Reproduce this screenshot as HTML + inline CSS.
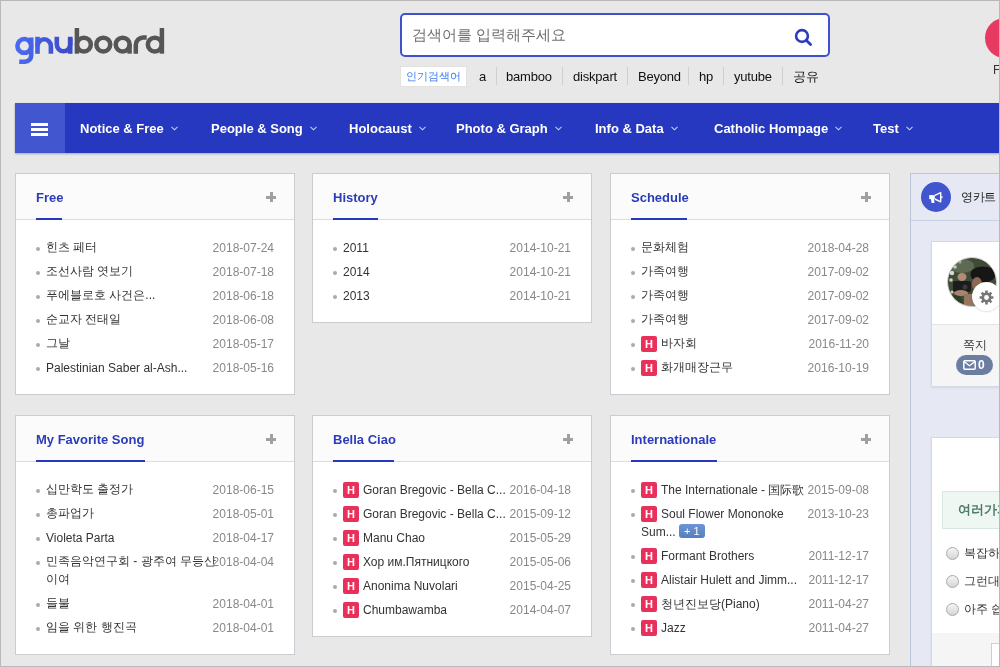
<!DOCTYPE html>
<html><head><meta charset="utf-8">
<style>
*{margin:0;padding:0;box-sizing:border-box}
html,body{width:1000px;height:667px;overflow:hidden}
body{background:#e8e8e8;font-family:"Liberation Sans",sans-serif;color:#333;position:relative}
.frame{position:absolute;left:0;top:0;width:1000px;height:667px;border:1px solid #b9b9b9;pointer-events:none;z-index:50}
.abs{position:absolute}
/* search */
.search{left:400px;top:13px;width:430px;height:44px;border:2px solid #3f51d0;border-radius:5px;background:#fff}
.search .ph{position:absolute;left:10px;top:11px;font-size:15px;color:#707070;line-height:18px}
.kw{top:66px;height:22px;font-size:13px;letter-spacing:-0.2px;line-height:22px;color:#111}
.kwbox{left:400px;top:66px;width:67px;height:21px;background:#fff;border:1px solid #e2e2e2;color:#3a7bf0;font-size:11px;line-height:19px;text-align:center}
.sep{position:absolute;top:67px;width:1px;height:18px;background:#cfcfcf}
/* nav */
.nav{left:15px;top:103px;width:985px;height:50px;background:#2538bf;box-shadow:0 1px 2px rgba(0,0,0,.28)}
.ham{left:15px;top:103px;width:50px;height:50px;background:#4257cf}
.ham i{position:absolute;left:16px;width:17px;height:3px;background:#fff}
.ni{position:absolute;top:120px;font-size:13px;font-weight:bold;color:#fff;line-height:18px;white-space:nowrap}
.chev{display:inline-block;margin-left:7px;vertical-align:2px;width:7px;height:5px}
/* cards */
.card{position:absolute;width:280px;background:#fff;border:1px solid #c9ccd0}
.card .hd{height:46px;background:#fbfbfb;border-bottom:1px solid #dcdcdc;position:relative}
.card .hd b{position:absolute;left:20px;top:15px;font-size:13px;color:#2a3cba;line-height:18px;white-space:nowrap}
.card .hd u{position:absolute;left:20px;top:44px;height:2px;background:#2538bf;text-decoration:none}
.card .hd .plus{position:absolute;right:18px;top:18px;width:10px;height:10px}
.card .hd .plus:before{content:"";position:absolute;left:0;top:3.5px;width:10px;height:3px;background:#a0a0a0}
.card .hd .plus:after{content:"";position:absolute;left:3.5px;top:0;width:3px;height:10px;background:#a0a0a0}
.card ul{list-style:none;padding:15px 20px 15px 20px}
.card li{position:relative;padding:3px 0 3px 10px;white-space:nowrap;line-height:18px;font-size:12px;color:#333}
.card li:before{content:"";position:absolute;left:0;top:12px;width:4px;height:4px;border-radius:50%;background:#aaa}
.card li .t{position:relative}.card li .t.e{top:1px}.card li .d{position:absolute;right:0;top:4px;color:#888;background:transparent}
.h{display:inline-block;width:16px;height:16px;background:#e8305a;border-radius:2px;color:#fff;font-size:11px;font-weight:bold;text-align:center;line-height:16px;vertical-align:top;margin:2px 4px 0 0}
.plus1{display:inline-block;background:linear-gradient(#6b95d3,#5580c0);color:#fff;font-size:11px;line-height:14px;padding:0 5px;border-radius:3px;margin-left:0;vertical-align:1px}
/* sidebar */
.side{left:910px;top:173px;width:100px;height:500px;background:#e6e9f3;border:1px solid #b9c7da}
</style></head><body><div style="will-change:transform;position:absolute;left:0;top:0;width:1000px;height:667px">
<div class="frame"></div>

<!-- logo -->
<svg class="abs" style="left:0;top:0" width="180" height="80" viewBox="0 0 180 80">
 <defs><linearGradient id="lg" gradientUnits="userSpaceOnUse" x1="14" y1="0" x2="73" y2="0"><stop offset="0" stop-color="#4a6cf6"/><stop offset="1" stop-color="#3b49c6"/></linearGradient></defs>
 <g fill="none" stroke="url(#lg)" stroke-width="4.6">
  <circle cx="24.3" cy="45.9" r="6.9"/>
  <path d="M31.2 37.5V55.5a6.2 6.2 0 0 1-6.2 6.2H19.2"/>
  <path d="M37.5 36.8V53.8"/><path d="M37.5 46a6.7 6.7 0 0 1 13.4 0V53.8"/>
  <path d="M56.8 36.8V44.6a6.7 6.7 0 0 0 13.4 0V36.8"/><path d="M70.2 38V53.8"/>
 </g>
 <g fill="none" stroke="#565656" stroke-width="4.5">
  <path d="M76.9 28V53.7"/><circle cx="83.9" cy="44.6" r="6.95"/>
  <circle cx="103.3" cy="44.6" r="6.95"/>
  <circle cx="122.65" cy="44.6" r="6.95"/><path d="M129.6 44.6V53.7"/>
  <path d="M135.8 53.7V45a7.5 7.5 0 0 1 7.5-7.5h3.4"/>
  <circle cx="154.8" cy="44.6" r="6.95"/><path d="M161.9 28V53.7"/>
 </g>
</svg>

<!-- search -->
<div class="abs search"><span class="ph">검색어를 입력해주세요</span>
 <svg style="position:absolute;left:391px;top:13px" width="20" height="20" viewBox="0 0 20 20"><circle cx="9" cy="8" r="5.9" fill="none" stroke="#2a3bbf" stroke-width="2.6"/><path d="M13.2 12.2L17.6 16.6" stroke="#2a3bbf" stroke-width="2.8" stroke-linecap="round"/></svg>
</div>
<div class="abs kwbox">인기검색어</div>
<div class="abs kw" style="left:479px">a</div>
<div class="sep" style="left:496px"></div>
<div class="abs kw" style="left:506px">bamboo</div>
<div class="sep" style="left:562px"></div>
<div class="abs kw" style="left:573px">diskpart</div>
<div class="sep" style="left:627px"></div>
<div class="abs kw" style="left:638px">Beyond</div>
<div class="sep" style="left:688px"></div>
<div class="abs kw" style="left:699px">hp</div>
<div class="sep" style="left:723px"></div>
<div class="abs kw" style="left:734px">yutube</div>
<div class="sep" style="left:782px"></div>
<div class="abs kw" style="left:793px">공유</div>

<!-- right top -->
<div class="abs" style="left:985px;top:18px;width:40px;height:40px;border-radius:50%;background:#e63a62"></div>
<div class="abs" style="left:993px;top:63px;font-size:12px;color:#333">F</div>

<!-- nav -->
<div class="abs nav"></div>
<div class="abs ham"><i style="top:20px"></i><i style="top:25px"></i><i style="top:30px"></i></div>
<div class="ni" style="left:80px">Notice &amp; Free<svg class="chev" viewBox="0 0 7 5"><path d="M0.5 0.8L3.5 3.8L6.5 0.8" fill="none" stroke="#c9cff0" stroke-width="1.1"/></svg></div>
<div class="ni" style="left:211px">People &amp; Song<svg class="chev" viewBox="0 0 7 5"><path d="M0.5 0.8L3.5 3.8L6.5 0.8" fill="none" stroke="#c9cff0" stroke-width="1.1"/></svg></div>
<div class="ni" style="left:349px">Holocaust<svg class="chev" viewBox="0 0 7 5"><path d="M0.5 0.8L3.5 3.8L6.5 0.8" fill="none" stroke="#c9cff0" stroke-width="1.1"/></svg></div>
<div class="ni" style="left:456px">Photo &amp; Graph<svg class="chev" viewBox="0 0 7 5"><path d="M0.5 0.8L3.5 3.8L6.5 0.8" fill="none" stroke="#c9cff0" stroke-width="1.1"/></svg></div>
<div class="ni" style="left:595px">Info &amp; Data<svg class="chev" viewBox="0 0 7 5"><path d="M0.5 0.8L3.5 3.8L6.5 0.8" fill="none" stroke="#c9cff0" stroke-width="1.1"/></svg></div>
<div class="ni" style="left:714px">Catholic Hompage<svg class="chev" viewBox="0 0 7 5"><path d="M0.5 0.8L3.5 3.8L6.5 0.8" fill="none" stroke="#c9cff0" stroke-width="1.1"/></svg></div>
<div class="ni" style="left:873px">Test<svg class="chev" viewBox="0 0 7 5"><path d="M0.5 0.8L3.5 3.8L6.5 0.8" fill="none" stroke="#c9cff0" stroke-width="1.1"/></svg></div>

<!-- cards -->
<div class="card" style="left:15px;top:173px"><div class="hd"><b>Free</b><u style="width:26px"></u><span class="plus"></span></div><ul><li><span class="t">힌츠 페터</span><span class="d">2018-07-24</span></li><li><span class="t">조선사람 엿보기</span><span class="d">2018-07-18</span></li><li><span class="t">푸에블로호 사건은...</span><span class="d">2018-06-18</span></li><li><span class="t">순교자 전태일</span><span class="d">2018-06-08</span></li><li><span class="t">그날</span><span class="d">2018-05-17</span></li><li><span class="t e">Palestinian Saber al-Ash...</span><span class="d">2018-05-16</span></li></ul></div>
<div class="card" style="left:312px;top:173px"><div class="hd"><b>History</b><u style="width:45px"></u><span class="plus"></span></div><ul><li><span class="t e">2011</span><span class="d">2014-10-21</span></li><li><span class="t e">2014</span><span class="d">2014-10-21</span></li><li><span class="t e">2013</span><span class="d">2014-10-21</span></li></ul></div>
<div class="card" style="left:610px;top:173px"><div class="hd"><b>Schedule</b><u style="width:56px"></u><span class="plus"></span></div><ul><li><span class="t">문화체험</span><span class="d">2018-04-28</span></li><li><span class="t">가족여행</span><span class="d">2017-09-02</span></li><li><span class="t">가족여행</span><span class="d">2017-09-02</span></li><li><span class="t">가족여행</span><span class="d">2017-09-02</span></li><li><span class="h">H</span><span class="t">바자회</span><span class="d">2016-11-20</span></li><li><span class="h">H</span><span class="t">화개매장근무</span><span class="d">2016-10-19</span></li></ul></div>
<div class="card" style="left:15px;top:415px"><div class="hd"><b>My Favorite Song</b><u style="width:109px"></u><span class="plus"></span></div><ul><li><span class="t">십만학도 출정가</span><span class="d">2018-06-15</span></li><li><span class="t">총파업가</span><span class="d">2018-05-01</span></li><li><span class="t e">Violeta Parta</span><span class="d">2018-04-17</span></li><li><span class="t">민족음악연구회 - 광주여 무등산<br>이여</span><span class="d">2018-04-04</span></li><li><span class="t">들불</span><span class="d">2018-04-01</span></li><li><span class="t">임을 위한 행진곡</span><span class="d">2018-04-01</span></li></ul></div>
<div class="card" style="left:312px;top:415px"><div class="hd"><b>Bella Ciao</b><u style="width:61px"></u><span class="plus"></span></div><ul><li><span class="h">H</span><span class="t e">Goran Bregovic - Bella C...</span><span class="d">2016-04-18</span></li><li><span class="h">H</span><span class="t e">Goran Bregovic - Bella C...</span><span class="d">2015-09-12</span></li><li><span class="h">H</span><span class="t e">Manu Chao</span><span class="d">2015-05-29</span></li><li><span class="h">H</span><span class="t e">Хор им.Пятницкого</span><span class="d">2015-05-06</span></li><li><span class="h">H</span><span class="t e">Anonima Nuvolari</span><span class="d">2015-04-25</span></li><li><span class="h">H</span><span class="t e">Chumbawamba</span><span class="d">2014-04-07</span></li></ul></div>
<div class="card" style="left:610px;top:415px"><div class="hd"><b>Internationale</b><u style="width:86px"></u><span class="plus"></span></div><ul><li><span class="h">H</span><span class="t e">The Internationale - 国际歌</span><span class="d">2015-09-08</span></li><li><span class="h">H</span><span class="t e">Soul Flower Mononoke<br>Sum... <span class="plus1">+ 1</span></span><span class="d">2013-10-23</span></li><li><span class="h">H</span><span class="t e">Formant Brothers</span><span class="d">2011-12-17</span></li><li><span class="h">H</span><span class="t e">Alistair Hulett and Jimm...</span><span class="d">2011-12-17</span></li><li><span class="h">H</span><span class="t e">청년진보당(Piano)</span><span class="d">2011-04-27</span></li><li><span class="h">H</span><span class="t e">Jazz</span><span class="d">2011-04-27</span></li></ul></div>

<!-- sidebar -->
<div class="abs side"></div>
<div class="abs" style="left:911px;top:220px;width:89px;height:1px;background:#c7d1e2"></div>
<div class="abs" style="left:921px;top:182px;width:30px;height:30px;border-radius:50%;background:#4155cf"></div>
<svg class="abs" style="left:928px;top:191px" width="16" height="14" viewBox="0 0 16 14"><path d="M1.2 4.1h5.6v4H1.2z" fill="#fff"/><path d="M2.8 7.5h3.2l0.5 4.4H3.6z" fill="#fff"/><path d="M6.8 4.4L12.7 1.6V10.8L6.8 8" fill="none" stroke="#fff" stroke-width="1.4" stroke-linejoin="round"/><rect x="13.2" y="5.2" width="1.3" height="2" fill="#fff"/></svg>
<div class="abs" style="left:961px;top:188px;font-size:12px;letter-spacing:-0.5px;line-height:18px;color:#222;white-space:nowrap">영카트</div>
<div class="abs" style="left:931px;top:241px;width:80px;height:146px;background:#fff;border:1px solid #d3dae6;box-shadow:0 1px 2px rgba(0,0,0,.08)"></div>
<div class="abs" style="left:932px;top:324px;width:80px;height:62px;background:#f5f5f5;border-top:1px solid #e3e3e3"></div>
<svg class="abs" style="left:946px;top:256px" width="52" height="52" viewBox="0 0 52 52"><defs><clipPath id="cp"><circle cx="26" cy="26" r="24.3"/></clipPath><filter id="bl"><feGaussianBlur stdDeviation="0.7"/></filter></defs>
<g clip-path="url(#cp)"><rect width="52" height="52" fill="#3f4b37"/>
<g filter="url(#bl)"><ellipse cx="16" cy="10" rx="12" ry="7" fill="#5f6a55"/><circle cx="6" cy="17" r="2.2" fill="#d9dcd2"/><circle cx="9" cy="11" r="1.8" fill="#c8ccc0"/><circle cx="5" cy="24" r="1.8" fill="#cfd2c8"/><circle cx="6" cy="36" r="1.6" fill="#c9ccc2"/><circle cx="14" cy="6" r="1.5" fill="#aab0a0"/><circle cx="10" cy="45" r="6" fill="#2f3c28"/>
<ellipse cx="37" cy="18.5" rx="12.5" ry="8" fill="#141414"/><ellipse cx="31" cy="28" rx="5" ry="7" fill="#8e6a55"/><ellipse cx="16" cy="21" rx="4.5" ry="4" fill="#b28c76"/><rect x="7" y="25" width="18" height="11" rx="2" fill="#1d1d1d"/><circle cx="19" cy="31" r="2.5" fill="#3a3a3a"/><ellipse cx="15" cy="37" rx="7" ry="3" fill="#a88470"/><rect x="18" y="38" width="10" height="14" fill="#97755f"/></g>
</g><circle cx="26" cy="26" r="24.5" fill="none" stroke="#c9c9c9" stroke-width="1"/></svg>
<div class="abs" style="left:972px;top:282px;width:29px;height:29px;border-radius:50%;background:#fff;box-shadow:0 1px 2px rgba(0,0,0,.12)"></div>
<svg class="abs" style="left:979px;top:290px" width="15" height="15" viewBox="0 0 15 15"><g fill="#777"><circle cx="7.5" cy="7.5" r="5"/><g stroke="#777" stroke-width="2.6"><path d="M7.5 0.6v13.8M0.6 7.5h13.8M2.6 2.6l9.8 9.8M12.4 2.6l-9.8 9.8"/></g></g><circle cx="7.5" cy="7.5" r="2.4" fill="#fff"/></svg>
<div class="abs" style="left:963px;top:337px;font-size:12px;line-height:17px;color:#333;white-space:nowrap">쪽지</div>
<div class="abs" style="left:956px;top:355px;width:37px;height:20px;border-radius:10px;background:#6b7ea2"></div>
<svg class="abs" style="left:963px;top:360px" width="13" height="10" viewBox="0 0 13 10"><rect x="0.8" y="0.8" width="11.4" height="8.4" rx="1" fill="none" stroke="#fff" stroke-width="1.5"/><path d="M1 1.5l5.5 4.2 5.5-4.2" fill="none" stroke="#fff" stroke-width="1.4"/></svg>
<div class="abs" style="left:978px;top:357px;font-size:12px;font-weight:bold;line-height:16px;color:#fff">0</div>
<div class="abs" style="left:931px;top:437px;width:80px;height:240px;background:#fff;border:1px solid #d3dae6;box-shadow:0 1px 2px rgba(0,0,0,.08)"></div>
<div class="abs" style="left:942px;top:491px;width:70px;height:38px;background:#eff7f2;border:1px solid #d6e8dc"></div>
<div class="abs" style="left:958px;top:501px;font-size:13px;font-weight:bold;line-height:18px;color:#4f7c66;white-space:nowrap">여러가지</div>
<div class="abs" style="left:946px;top:547px;width:13px;height:13px;border-radius:50%;border:1px solid #a9a9a9;background:linear-gradient(#f4f4f4,#d6d6d6)"></div>
<div class="abs" style="left:946px;top:575px;width:13px;height:13px;border-radius:50%;border:1px solid #a9a9a9;background:linear-gradient(#f4f4f4,#d6d6d6)"></div>
<div class="abs" style="left:946px;top:603px;width:13px;height:13px;border-radius:50%;border:1px solid #a9a9a9;background:linear-gradient(#f4f4f4,#d6d6d6)"></div>
<div class="abs" style="left:964px;top:545px;font-size:12px;line-height:17px;color:#333;white-space:nowrap">복잡하다</div>
<div class="abs" style="left:964px;top:573px;font-size:12px;line-height:17px;color:#333;white-space:nowrap">그런대로</div>
<div class="abs" style="left:964px;top:601px;font-size:12px;line-height:17px;color:#333;white-space:nowrap">아주 쉽다</div>
<div class="abs" style="left:932px;top:633px;width:80px;height:40px;background:#f5f5f5"></div>
<div class="abs" style="left:991px;top:643px;width:30px;height:30px;background:#fff;border:1px solid #cfcfcf"></div>

</div></body></html>
